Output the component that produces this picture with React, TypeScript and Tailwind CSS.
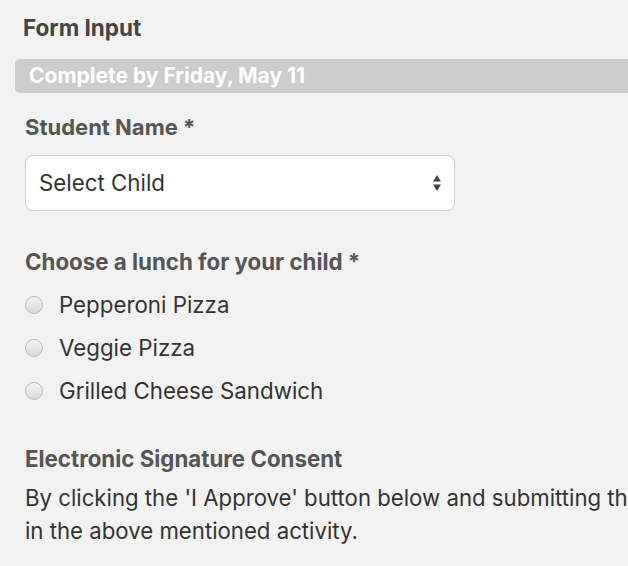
import React from "react";

function Radio({ label }: { label: string }) {
  return (
    <div className="flex items-center h-[43px]">
      <span className="w-[18px] h-[18px] rounded-full border border-[#bababa] bg-gradient-to-b from-[#f6f6f6] to-[#d8d8d8] ml-[25px] mr-[16px] shrink-0" />
      <span className="text-[22.3px] leading-[28px] text-[#333]">{label}</span>
    </div>
  );
}

export default function App() {
  return (
    <div className="w-[628px] h-[566px] bg-[#f2f2f2] overflow-hidden font-[Inter] flex flex-col">
      <div className="mt-[14px] pl-[23px] h-[28px] text-[22.5px] font-bold text-[#444] leading-[28px]">Form Input</div>
      <div className="mt-[17px] ml-[15px] h-[34px] bg-[#cccccc] rounded-l-[5px] flex items-center pl-[14px]">
        <span className="text-white font-bold text-[21px] leading-[28px]">Complete by Friday, May 11</span>
      </div>
      <div className="pl-[25px] flex flex-col">
        <div className="mt-[20px] h-[28px] text-[22px] font-bold text-[#555] leading-[28px]">Student Name *</div>
        <div className="mt-[14px] w-[430px] h-[56px] bg-white border border-[#d0d0d0] rounded-[8px] flex items-center justify-between pl-[13px] pr-[12px]">
          <span className="text-[22.3px] leading-[28px] text-[#333]">Select Child</span>
          <svg width="10" height="20" viewBox="0 0 10 20">
            <polygon points="5,2 9,8.5 1,8.5" fill="#444" />
            <polygon points="1,11.5 9,11.5 5,18" fill="#444" />
          </svg>
        </div>
        <div className="mt-[37px] h-[28px] text-[22.3px] font-bold text-[#555] leading-[28px]">Choose a lunch for your child *</div>
      </div>
      <div className="mt-[7px] flex flex-col">
        <Radio label="Pepperoni Pizza" />
        <Radio label="Veggie Pizza" />
        <Radio label="Grilled Cheese Sandwich" />
      </div>
      <div className="pl-[25px] flex flex-col">
        <div className="mt-[33px] h-[28px] text-[22.3px] font-bold text-[#555] leading-[28px]">Electronic Signature Consent</div>
        <p className="mt-[8px] text-[22.2px] text-[#333] leading-[33px] whitespace-nowrap">
          By clicking the 'I Approve' button below and submitting this form, I give consent for my child to participate
          <br />
          in the above mentioned activity.
        </p>
      </div>
    </div>
  );
}
